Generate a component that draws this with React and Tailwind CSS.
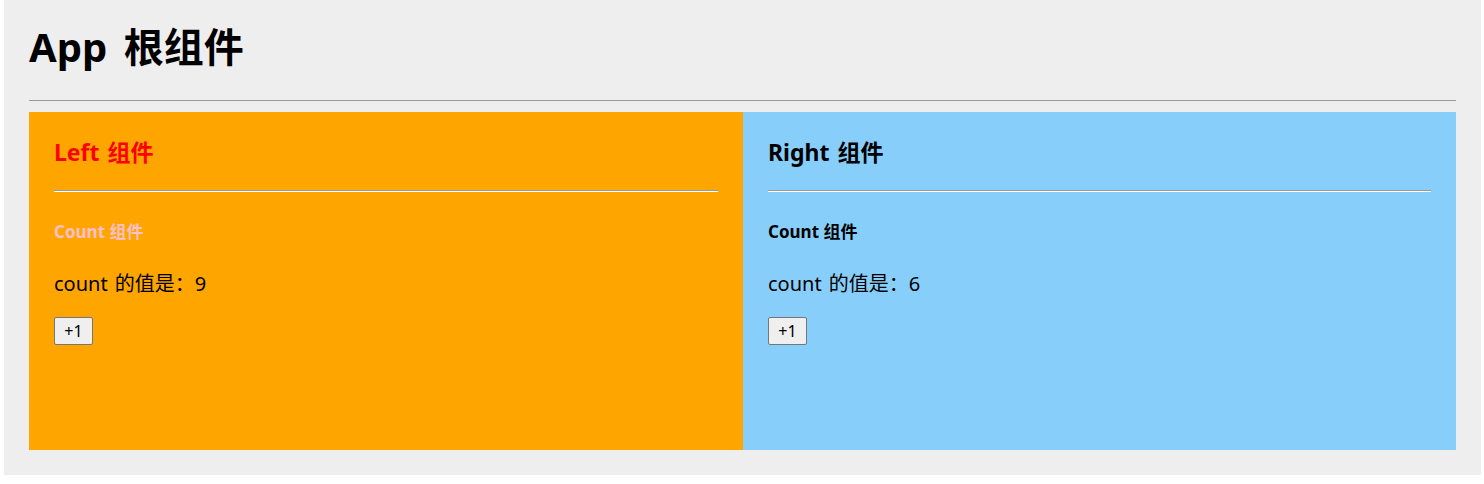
import React, { useState } from "react";

const FONT = { fontFamily: '"Noto Sans", "Noto Sans CJK SC", sans-serif' };

function Count({ initial, labelColor }) {
  const [count, setCount] = useState(initial);
  return (
    <div>
      <div className={`text-[17px] leading-[20px] h-[20px] font-bold mt-[30px] ${labelColor}`}>Count 组件</div>
      <div className="text-[20px] leading-[24px] h-[24px] text-black mt-[30px] [word-spacing:2px]">count 的值是：{count}</div>
      <button
        onClick={() => setCount(count + 1)}
        className="mt-[21px] w-[39px] h-[28px] bg-[#efefef] border border-[#767676] rounded-[2px] text-[16px] leading-none text-black flex items-center justify-center"
      >
        +1
      </button>
    </div>
  );
}

function Panel({ title, titleColor, labelColor, bg, initial, width }) {
  return (
    <div className={`${bg} ${width} h-[338px] px-[25px] pt-[25px]`}>
      <div className={`text-[23px] leading-[30px] h-[30px] font-bold [word-spacing:2px] ${titleColor}`}>{title}</div>
      <div className="mt-[23px] border-t border-t-[#9a9a9a] border-b border-b-white h-[2px]" />
      <Count initial={initial} labelColor={labelColor} />
    </div>
  );
}

export default function App() {
  return (
    <div className="bg-white w-[1484px] h-[484px]" style={FONT}>
      <div className="ml-[4px] w-[1477px] h-[475px] bg-[#eeeeee] px-[25px] pt-[23px]">
        <h1 className="text-[40px] leading-[48px] h-[48px] font-bold text-black [word-spacing:6px]">App 根组件</h1>
        <div className="mt-[29px] border-t border-t-[#9a9a9a]" />
        <div className="mt-[11px] flex">
          <Panel title="Left 组件" titleColor="text-[#ff0000]" labelColor="text-[#ffc0cb]" bg="bg-[#ffa500]" initial={9} width="w-[714px]" />
          <Panel title="Right 组件" titleColor="text-black" labelColor="text-black" bg="bg-[#87cefa]" initial={6} width="w-[713px]" />
        </div>
      </div>
    </div>
  );
}
